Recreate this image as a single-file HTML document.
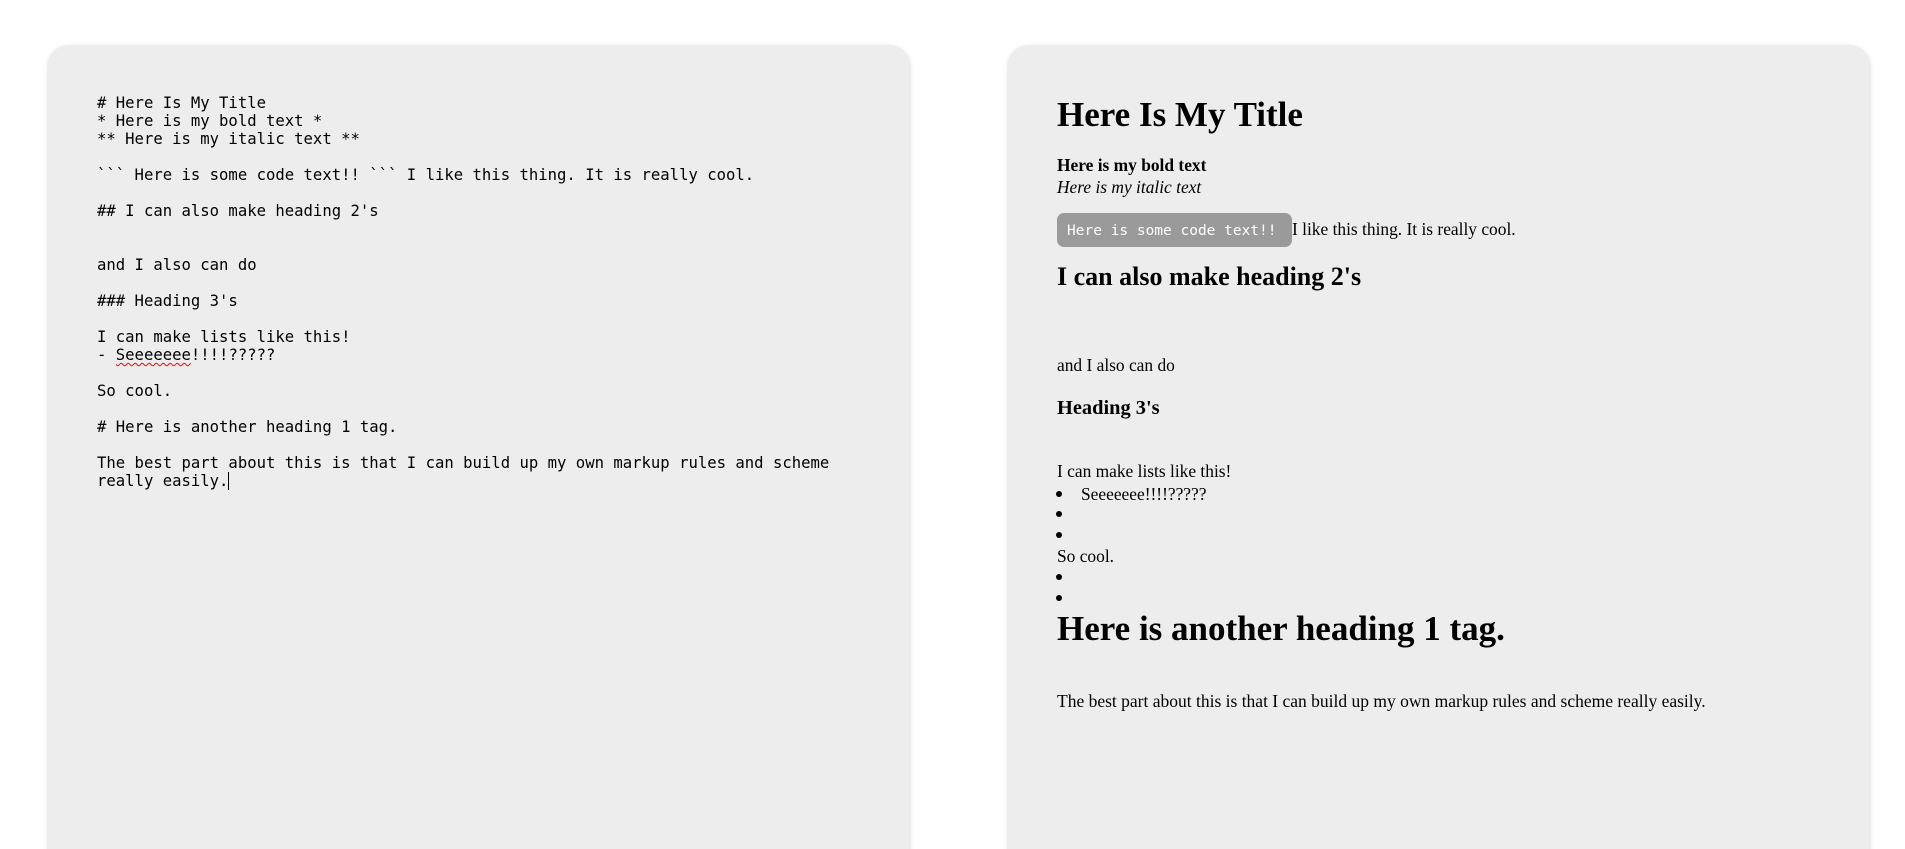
<!DOCTYPE html>
<html><head><meta charset="utf-8"><style>
html,body{margin:0;padding:0;background:#fff;width:1905px;height:849px;overflow:hidden;position:relative}
.panel{position:absolute;top:45px;height:900px;width:864px;background:#ededed;border-radius:22px;box-shadow:0 0 4px rgba(0,0,0,.08)}
#l{left:47px}#r{left:1007px}
pre{position:absolute;left:97px;top:94px;margin:0;font-family:"DejaVu Sans Mono",monospace;font-size:15.6px;line-height:18px;color:#000}
.sq{text-decoration:underline wavy red;text-decoration-thickness:1px;text-underline-offset:2px}
.cur{display:inline-block;width:1px;height:18px;background:#000;vertical-align:-4px}
.t{position:absolute;left:1057px;white-space:nowrap;font-family:"Liberation Serif",serif;color:#000;line-height:1}
.b{font-weight:bold}
.code{position:absolute;left:1057px;top:213px;width:235px;height:34px;background:#9a9a9a;border-radius:7px}
.ct{position:absolute;left:1067px;white-space:nowrap;font-family:"DejaVu Sans Mono",monospace;font-size:14.5px;color:#fff;line-height:1}
.dot{position:absolute;left:1056px;width:6px;height:6px;border-radius:50%;background:#000}
</style></head><body>
<div class="panel" id="l"></div>
<div class="panel" id="r"></div>
<pre># Here Is My Title
* Here is my bold text *
** Here is my italic text **

&#96;&#96;&#96; Here is some code text!! &#96;&#96;&#96; I like this thing. It is really cool.

## I can also make heading 2's


and I also can do

### Heading 3's

I can make lists like this!
- <span class="sq">Seeeeeee</span>!!!!?????

So cool.

# Here is another heading 1 tag.

The best part about this is that I can build up my own markup rules and scheme
really easily.<span class="cur"></span></pre>

<div class="t b" style="font-size:35px;top:97px">Here Is My Title</div>
<div class="t b" style="font-size:17.4px;top:157px">Here is my bold text</div>
<div class="t" style="font-size:17.4px;top:179px;font-style:italic">Here is my italic text</div>
<div class="code"></div>
<div class="ct" style="top:224px">Here is some code text!!</div>
<div class="t" style="font-size:17.4px;top:221px;left:1292px">I like this thing. It is really cool.</div>
<div class="t b" style="font-size:26px;top:264px">I can also make heading 2's</div>
<div class="t" style="font-size:17.4px;top:357px">and I also can do</div>
<div class="t b" style="font-size:20.4px;top:398px">Heading 3's</div>
<div class="t" style="font-size:17.4px;top:463px">I can make lists like this!</div>
<div class="dot" style="top:491px"></div>
<div class="t" style="font-size:17.4px;top:486px;left:1081px">Seeeeeee!!!!?????</div>
<div class="dot" style="top:511px"></div>
<div class="dot" style="top:532px"></div>
<div class="t" style="font-size:17.4px;top:548px">So cool.</div>
<div class="dot" style="top:574px"></div>
<div class="dot" style="top:595px"></div>
<div class="t b" style="font-size:35px;top:611px">Here is another heading 1 tag.</div>
<div class="t" style="font-size:17.5px;top:693px">The best part about this is that I can build up my own markup rules and scheme really easily.</div>
</body></html>
